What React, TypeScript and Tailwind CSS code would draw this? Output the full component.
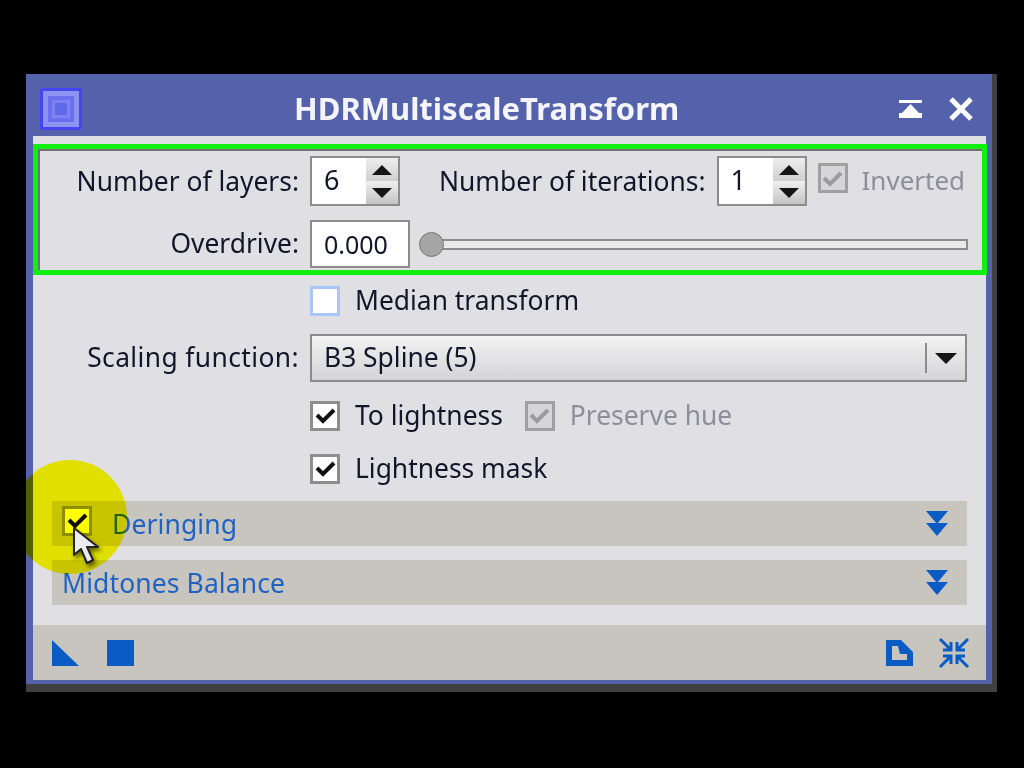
const font = "font-['Noto_Sans','Open_Sans',sans-serif]";

function Check({ state = "on" }: { state?: "on" | "off" | "disabled" | "focus" }) {
  const box =
    state === "disabled"
      ? "border-[#a0a0a0] bg-[#d6d6d9]"
      : state === "focus"
        ? "border-[#a9c6f7] bg-white"
        : "border-[#8e8e8e] bg-white";
  return (
    <div className={`flex h-[30px] w-[30px] shrink-0 items-center justify-center border-[3px] ${box}`}>
      {state !== "off" && state !== "focus" && (
        <svg width="21" height="17" viewBox="0 0 21 17">
          <path
            d="M2 8l6 6L19 3"
            fill="none"
            stroke={state === "disabled" ? "#9b9b9b" : "#111"}
            strokeWidth="4"
          />
        </svg>
      )}
    </div>
  );
}

function Spinner({ value }: { value: string }) {
  return (
    <div className="flex h-[50px] w-[90px] shrink-0 border-2 border-[#8c8c8c] bg-white">
      <div className="flex-1 pl-[12px] text-[27px] leading-[44px] text-[#14142a]">{value}</div>
      <div className="flex w-[32px] flex-col">
        <div className="flex flex-1 items-center justify-center bg-gradient-to-b from-[#eeeeee] to-[#cfcfcf]">
          <svg width="20" height="10" viewBox="0 0 20 10">
            <path d="M10 0l10 10H0z" fill="#161616" />
          </svg>
        </div>
        <div className="flex flex-1 items-center justify-center bg-gradient-to-b from-[#f0f0f0] to-[#c4c4c4]">
          <svg width="20" height="10" viewBox="0 0 20 10">
            <path d="M10 10L20 0H0z" fill="#161616" />
          </svg>
        </div>
      </div>
    </div>
  );
}

function DoubleDown() {
  return (
    <svg width="22" height="25" viewBox="0 0 22 25">
      <path d="M0 0h22L11 13zM0 12h22L11 25z" fill="#0a5cc4" />
    </svg>
  );
}

function Section({ title, checked }: { title: string; checked?: boolean }) {
  return (
    <div className="flex h-[45px] items-center bg-[#c8c5bf] pl-[10px] pr-[19px]">
      {checked && (
        <div className="mr-[20px] -translate-y-[3px]">
          <Check />
        </div>
      )}
      <span className="translate-y-[1px] text-[26.5px] tracking-[0.1px] text-[#1f62c4]">{title}</span>
      <div className="ml-auto">
        <DoubleDown />
      </div>
    </div>
  );
}

export default function App() {
  return (
    <div className={`h-[768px] w-[1024px] bg-black pl-[26px] pt-[74px] ${font}`}>
      <div className="relative flex h-[618px] w-[971px] flex-col overflow-hidden border-b-[8px] border-r-[5px] border-[#3f3f3f] bg-[#5461ab]">
        {/* title bar */}
        <div className="flex h-[62px] shrink-0 items-center pl-[14px] pr-[19px] pt-[8px]">
          <div className="flex h-[42px] w-[42px] items-center justify-center rounded-[3px] bg-[#4646f0] p-[3px]">
            <div className="h-full w-full border-[5px] border-[#8f93f0] bg-[#6a70ee] p-[4px]">
              <div className="h-full w-full border-[3px] border-[#7d83f0] bg-[#6268ea]" />
            </div>
          </div>
          <div className="ml-[212px] -translate-y-[1px] text-[31px] font-bold text-[#f4f4fa]">
            HDRMultiscaleTransform
          </div>
          <div className="ml-auto flex items-center gap-[27px]">
            <svg width="23" height="18" viewBox="0 0 23 18">
              <path d="M0 0h23v3H0zM11.500 4L20 13H3zM0 13h23v5H0z" fill="#fff" />
            </svg>
            <svg width="24" height="24" viewBox="0 0 24 24">
              <path d="M2 2l20 20M22 2L2 22" stroke="#fff" strokeWidth="5" />
            </svg>
          </div>
        </div>

        {/* body */}
        <div className="ml-[7px] mr-[6px] flex flex-1 flex-col bg-[#e0dfe4] text-[26.4px] text-[#14142a]">
          <div className="-mr-px mt-[8px] h-[131px] shrink-0 border-[5px] border-[#10f010]">
            <div className="h-full border-l-2 border-t-2 border-[#707070] pt-[5px]">
              <div className="flex h-[50px] items-center">
                <div className="w-[259px] translate-y-[1px] text-right">Number of layers:</div>
                <div className="ml-[11px]">
                  <Spinner value="6" />
                </div>
                <div className="ml-[39px] translate-y-[1px]">Number of iterations:</div>
                <div className="ml-[11px]">
                  <Spinner value="1" />
                </div>
                <div className="ml-[11px] -translate-y-[3px]">
                  <Check state="disabled" />
                </div>
                <div className="ml-[14px] -translate-y-[1px] text-[26px] text-[#8e8e98]">Inverted</div>
              </div>
              <div className="mt-[14px] flex h-[48px] items-center">
                <div className="w-[259px] text-right">Overdrive:</div>
                <div className="ml-[11px] h-[48px] w-[100px] border-2 border-[#8c8c8c] bg-white pl-[12px] text-[25px] leading-[44px]">
                  0.000
                </div>
                <div className="relative ml-[10px] h-[11px] w-[548px] border-2 border-[#8c8c8c] bg-[#e9e9e9]">
                  <div className="absolute -top-[9px] -left-[3px] h-[25px] w-[25px] rounded-full border border-[#777] bg-[#a5a5a5]" />
                </div>
              </div>
            </div>
          </div>

          <div className="mt-[10px] flex h-[31px] items-center pl-[277px]">
            <Check state="focus" />
            <span className="ml-[15px]">Median transform</span>
          </div>

          <div className="mt-[18px] flex items-center">
            <div className="w-[266px] text-right tracking-[0.4px]">Scaling function:</div>
            <div className="ml-[11px] flex h-[48px] w-[657px] items-center border-2 border-[#8c8c8c] bg-gradient-to-b from-[#f3f3f3] to-[#d4d3d6] pl-[12px]">
              <span>B3 Spline (5)</span>
              <div className="ml-auto flex h-[30px] w-[40px] items-center justify-center border-l-2 border-[#8c8c8c]">
                <svg width="22" height="11" viewBox="0 0 22 11">
                  <path d="M0 0h22L11 11z" fill="#161616" />
                </svg>
              </div>
            </div>
          </div>

          <div className="mt-[18px] flex h-[31px] items-center pl-[277px]">
            <Check />
            <span className="ml-[15px]">To lightness</span>
            <div className="ml-[22px]">
              <Check state="disabled" />
            </div>
            <span className="ml-[15px] text-[#8e8e98]">Preserve hue</span>
          </div>

          <div className="mt-[22px] flex h-[31px] items-center pl-[277px]">
            <Check />
            <span className="ml-[15px]">Lightness mask</span>
          </div>

          <div className="mx-[19px] mt-[17px] flex flex-col gap-[14px]">
            <Section title="Deringing" checked />
            <Section title="Midtones Balance" />
          </div>

          {/* footer */}
          <div className="mt-auto flex h-[55px] items-center bg-[#c8c5bf] pl-[19px] pr-[16px]">
            <svg width="27" height="26" viewBox="0 0 27 26">
              <path d="M0 0l27 26H0z" fill="#0a5cc4" />
            </svg>
            <div className="ml-[28px] h-[26px] w-[27px] bg-[#0a5cc4]" />
            <svg className="ml-auto" width="27" height="26" viewBox="0 0 27 26">
              <path
                d="M0 0h15l12 12v14H0zM6 6v14h15v-6h-7l-2-8z"
                fill="#0a5cc4"
                fillRule="evenodd"
              />
            </svg>
            <svg className="ml-[25px]" width="32" height="32" viewBox="0 0 32 32">
              <path
                d="M2 2l10 10M13 5v8H5M30 2L20 12M19 5v8h8M2 30l10-10M13 27v-8H5M30 30L20 20M19 27v-8h8"
                fill="none"
                stroke="#0a5cc4"
                strokeWidth="3"
              />
            </svg>
          </div>
        </div>
        <div className="h-[4px] shrink-0" />

        {/* click highlight and pointer */}
        <div className="absolute left-[-13px] top-[386px] h-[114px] w-[114px] rounded-full bg-[#ffff00] mix-blend-multiply" />
        <svg
          className="absolute left-[46px] top-[452px] drop-shadow-[2px_3px_2px_rgba(0,0,0,0.55)]"
          width="32"
          height="40"
          viewBox="0 0 32 40"
        >
          <path
            d="M2 2v27l7-6 6 14 6-3-6-13h11z"
            fill="#ecebf2"
            stroke="#222"
            strokeWidth="2"
            strokeLinejoin="round"
          />
        </svg>
      </div>
    </div>
  );
}
